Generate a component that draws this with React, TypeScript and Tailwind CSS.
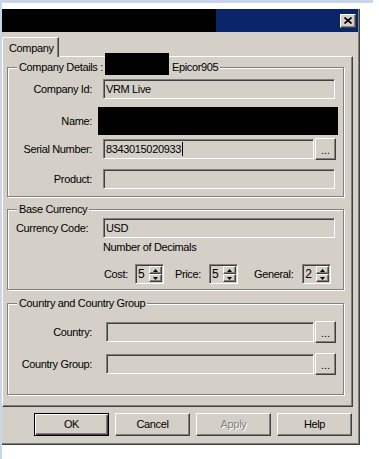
import React from "react";

const sunken =
  "border border-t-[#808080] border-l-[#808080] border-b-white border-r-white shadow-[inset_1px_1px_0_#404040,inset_-1px_-1px_0_#d4d0c8]";
const raised =
  "border border-t-white border-l-white border-b-[#404040] border-r-[#404040] shadow-[inset_-1px_-1px_0_#808080,inset_1px_1px_0_#d4d0c8]";
const etched =
  "relative border border-[#808080] shadow-[inset_1px_1px_0_white,1px_1px_0_white]";

function Field({ width, value, cursor }: { width: number; value?: string; cursor?: boolean }) {
  return (
    <div className={`${sunken} flex h-[20px] items-center bg-[#d4d0c8] pl-[2px]`} style={{ width }}>
      {value}
      {cursor && <span className="ml-px h-[14px] w-px bg-black" />}
    </div>
  );
}

function DotsButton() {
  return (
    <div className={`${raised} ml-px flex h-[22px] w-[21px] items-end justify-center bg-[#d4d0c8] pb-[3px] leading-none tracking-normal`}>
      ...
    </div>
  );
}

function Arrow({ up }: { up?: boolean }) {
  return (
    <svg width="5" height="3" viewBox="0 0 5 3">
      <path d={up ? "M2.5 0 L5 3 L0 3 Z" : "M0 0 L5 0 L2.5 3 Z"} fill="#000" />
    </svg>
  );
}

function Spinner({ value }: { value: string }) {
  return (
    <div className={`${sunken} flex h-[20px] w-[29px] bg-[#d4d0c8]`}>
      <div className="flex flex-1 items-center pl-[2px] text-[12px]">{value}</div>
      <div className="flex w-[14px] flex-col py-px pr-px">
        <div className={`${raised} flex flex-1 items-center justify-center`}>
          <Arrow up />
        </div>
        <div className={`${raised} flex flex-1 items-center justify-center`}>
          <Arrow />
        </div>
      </div>
    </div>
  );
}

function Legend({ children }: { children: React.ReactNode }) {
  return (
    <div className="absolute left-[9px] top-[-7px] flex h-[13px] items-center bg-[#d4d0c8] px-[2px] leading-[13px]">
      {children}
    </div>
  );
}

function DialogButton({ label, isDefault, disabled }: { label: string; isDefault?: boolean; disabled?: boolean }) {
  const frame = isDefault
    ? "border border-black shadow-[inset_1px_1px_0_white,inset_-1px_-1px_0_#404040,inset_-2px_-2px_0_#808080]"
    : raised;
  return (
    <div
      className={`${frame} flex h-[23px] w-[75px] items-center justify-center ${
        disabled ? "text-[#808080] [text-shadow:1px_1px_0_white]" : ""
      }`}
    >
      {label}
    </div>
  );
}

export default function App() {
  return (
    <div className="flex h-[459px] w-[379px] flex-col overflow-hidden bg-white font-['Liberation_Sans',Arial,sans-serif] text-[11px] tracking-[-0.35px] text-black">
      <div className="h-[3px] w-[373px] bg-[#c9d5e8]" />
      <div className="flex flex-1">
        <div className="w-[2px] bg-[#c9d5e8]" />
        <div className="mt-[6px] flex h-[436px] w-[358px] flex-col border-b border-r border-b-[#404040] border-r-[#404040] bg-[#d4d0c8] shadow-[inset_-1px_-1px_0_#808080]">
          {/* title bar */}
          <div className="flex h-[23px] w-[356px] items-center bg-[#0a246a]">
            <div className="h-[23px] w-[214px] bg-black" />
            <div className={`${raised} ml-auto mr-[2px] flex h-[14px] w-[16px] items-center justify-center bg-[#d4d0c8]`}>
              <svg width="8" height="7" viewBox="0 0 8 7">
                <path d="M0.5 0.5 L7.5 6.5 M7.5 0.5 L0.5 6.5" stroke="#000" strokeWidth="1.6" />
              </svg>
            </div>
          </div>

          {/* tab */}
          <div className="mt-[5px] flex">
            <div className="relative z-10 -mb-px flex h-[20px] w-[57px] items-center rounded-tl-[2px] border-l border-t border-r border-l-white border-t-white border-r-[#404040] bg-[#d4d0c8] pl-[6px] pt-px shadow-[inset_-1px_0_0_#808080]">
              Company
            </div>
          </div>

          {/* tab page */}
          <div className="flex h-[351px] w-[351px] flex-col border-b border-l border-r border-t border-b-[#404040] border-l-white border-r-[#404040] border-t-white shadow-[inset_-1px_-1px_0_#808080]">
            {/* Company Details */}
            <div className={`${etched} ml-[4px] mt-[10px] flex w-[337px] flex-col pb-[7px] pt-[11px]`}>
              <Legend>
                <span>Company Details :</span>
                <span className="relative -top-[4px] ml-[2px] h-[22px] w-[64px] self-center bg-black" />
                <span className="ml-[3px]">Epicor905</span>
              </Legend>
              <div className="flex h-[20px] items-center">
                <div className="w-[84px] text-right">Company Id:</div>
                <div className="ml-[11px]">
                  <Field width={232} value="VRM Live" />
                </div>
              </div>
              <div className="mt-[8px] flex h-[28px] items-center">
                <div className="w-[84px] text-right">Name:</div>
                <div className="ml-[6px] h-[28px] w-[240px] bg-black" />
              </div>
              <div className="mt-[3px] flex h-[22px] items-center">
                <div className="w-[84px] text-right">Serial Number:</div>
                <div className="ml-[11px]">
                  <Field width={211} value="8343015020933" cursor />
                </div>
                <DotsButton />
              </div>
              <div className="mt-[9px] flex h-[20px] items-center">
                <div className="w-[84px] text-right">Product:</div>
                <div className="ml-[11px]">
                  <Field width={232} />
                </div>
              </div>
            </div>

            {/* Base Currency */}
            <div className={`${etched} ml-[4px] mt-[12px] flex w-[337px] flex-col pb-[5px] pt-[8px]`}>
              <Legend>Base Currency</Legend>
              <div className="flex h-[20px] items-center">
                <div className="w-[95px] pl-[8px]">Currency Code:</div>
                <Field width={232} value="USD" />
              </div>
              <div className="mt-[3px] h-[13px] pl-[95px] leading-[13px]">Number of Decimals</div>
              <div className="mt-[10px] flex h-[20px] items-center pl-[96px]">
                <span>Cost:</span>
                <div className="ml-[7px]">
                  <Spinner value="5" />
                </div>
                <span className="ml-[11px]">Price:</span>
                <div className="ml-[8px]">
                  <Spinner value="5" />
                </div>
                <span className="ml-[16px]">General:</span>
                <div className="ml-[9px]">
                  <Spinner value="2" />
                </div>
              </div>
            </div>

            {/* Country and Country Group */}
            <div className={`${etched} ml-[4px] mt-[13px] flex w-[337px] flex-col pb-[19px] pt-[17px]`}>
              <Legend>Country and Country Group</Legend>
              <div className="flex h-[22px] items-center">
                <div className="w-[84px] text-right">Country:</div>
                <div className="ml-[14px]">
                  <Field width={208} />
                </div>
                <DotsButton />
              </div>
              <div className="mt-[10px] flex h-[22px] items-center">
                <div className="w-[84px] text-right">Country Group:</div>
                <div className="ml-[14px]">
                  <Field width={208} />
                </div>
                <DotsButton />
              </div>
            </div>
          </div>

          {/* buttons */}
          <div className="ml-[32px] mt-[6px] flex gap-[6px]">
            <DialogButton label="OK" isDefault />
            <DialogButton label="Cancel" />
            <DialogButton label="Apply" disabled />
            <DialogButton label="Help" />
          </div>
        </div>
      </div>
    </div>
  );
}
